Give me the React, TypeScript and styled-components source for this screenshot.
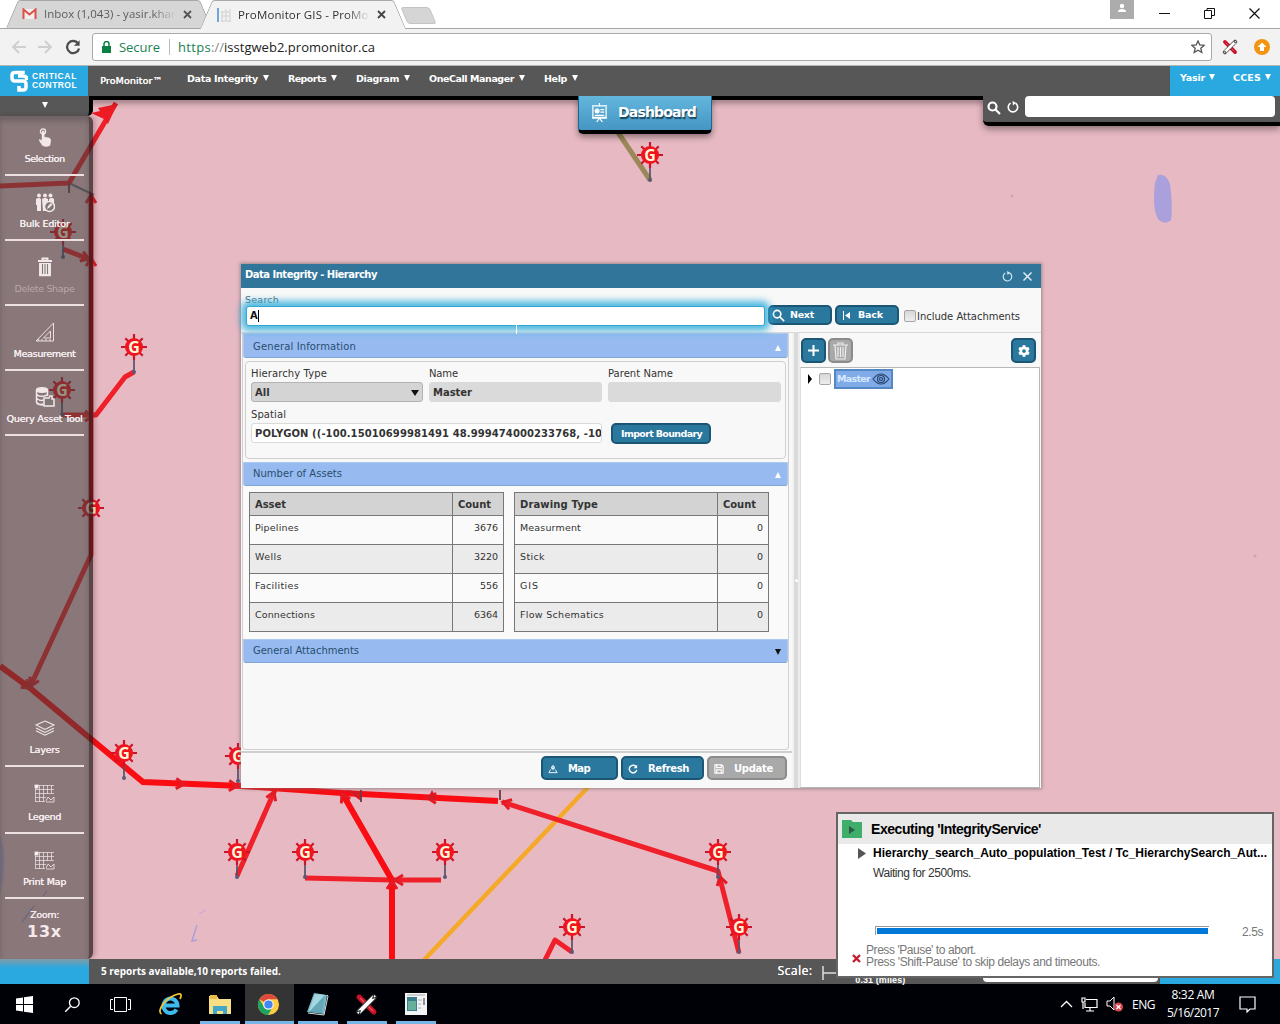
import React, { useLayoutEffect, useRef, useState } from "react";
import styled, { createGlobalStyle, css } from "styled-components";
import { FaCog } from "react-icons/fa";

const ui = '"DejaVu Sans", Verdana, sans-serif';
const chrome = '"Open Sans", "Segoe UI", sans-serif';
const arial = '"Liberation Sans", Arial, sans-serif';

const Global = createGlobalStyle`
  *, *::before, *::after { box-sizing: border-box; }
  body { margin: 0; overflow: hidden; background: #000; font-family: ${ui}; }
  svg { display: block; flex: none; }
`;

/* ---------- text with a fixed measure ---------- */
const TextSpan = styled.span<{ $size: number; $bold?: boolean; $color?: string; $font?: string; $shadow?: string }>`
  display: inline-block;
  flex: none;
  white-space: pre;
  font-family: ${(p) => p.$font || ui};
  font-size: ${(p) => p.$size}px;
  font-weight: ${(p) => (p.$bold ? 700 : 400)};
  color: ${(p) => p.$color || "inherit"};
  text-shadow: ${(p) => p.$shadow || "none"};
`;

type TextProps = { children: string; measure?: number; size: number; bold?: boolean; color?: string; font?: string; shadow?: string };

function Text({ children, measure, size, bold, color, font, shadow }: TextProps) {
  const ref = useRef<HTMLSpanElement>(null);
  const [tracking, setTracking] = useState(0);
  useLayoutEffect(() => {
    if (measure && ref.current) {
      const range = document.createRange();
      range.selectNodeContents(ref.current);
      setTracking((measure - range.getBoundingClientRect().width) / children.length);
    }
  }, []);
  return (
    <TextSpan ref={ref} $size={size} $bold={bold} $color={color} $font={font} $shadow={shadow} style={{ letterSpacing: tracking }}>
      {children}
    </TextSpan>
  );
}

const Screen = styled.div`
  width: 1280px; height: 1024px; display: flex; flex-direction: column; overflow: hidden; position: relative;
`;

/* ---------- browser ---------- */
const TabStrip = styled.div`
  height: 28px; display: flex; background: #fff; padding-left: 12px; flex: none; position: relative;
`;
const Tab = styled.div<{ $active?: boolean }>`
  position: relative; width: 194px; height: ${(p) => (p.$active ? 29 : 28)}px; flex: none; display: flex; align-items: center; gap: 7px;
  padding: 0 12px 0 10px; isolation: isolate; z-index: ${(p) => (p.$active ? 2 : 1)};
  &::before, &::after {
    content: ""; position: absolute; top: 0; bottom: 0; z-index: -1;
    background: ${(p) => (p.$active ? "#f2f2f2" : "#d6d6d6")}; border-top: 1px solid #a8a8a8;
  }
  &::before { left: 0; right: 30%; border-left: 1px solid #a0a0a0; transform: skewX(-23deg); border-radius: 3px 0 0 0; }
  &::after { right: 0; left: 30%; border-right: 1px solid #a0a0a0; transform: skewX(23deg); border-radius: 0 3px 0 0; }
`;
const TabTitle = styled.div`
  width: 132px; overflow: hidden; flex: none; height: 18px; line-height: 16px;
  mask-image: linear-gradient(90deg, #000 82%, transparent);
`;
const NewTab = styled.div`
  width: 29px; height: 17px; margin: 7px 0 0 4px; background: #d5d5d5; border: 1px solid #c4c4c4; border-radius: 3px; transform: skewX(23deg);
`;
const WindowButtons = styled.div`
  margin-left: auto; display: flex; align-items: flex-start; height: 28px; padding-right: 3px;
`;
const Profile = styled.div`
  width: 24px; height: 19px; background: #acacac; display: flex; justify-content: center; padding-top: 3px; margin-right: 8px;
`;
const WinBtn = styled.div`
  width: 45px; height: 27px; display: grid; place-items: center;
`;
const Toolbar = styled.div`
  height: 38px; flex: none; background: #f2f2f2; border-top: 1px solid #a5a5a5; border-bottom: 1px solid #b5b5b5;
  display: flex; align-items: center; padding-left: 11px;
`;
const NavIcons = styled.div` display: flex; gap: 12px; width: 81px; align-items: center; `;
const AddressBar = styled.div`
  width: 1120px; height: 28px; border: 1px solid #a9a9a9; border-radius: 3px; background: #fff; display: flex; align-items: center; padding: 0 6px 0 9px;
`;
const Divider = styled.i` width: 1px; height: 16px; background: #bdbdbd; margin: 0 8px 0 9px; `;
const Extensions = styled.div` display: flex; gap: 16px; padding-left: 10px; align-items: center; `;
const Push = styled.div` margin-left: auto; `;
const LockSlot = styled.div` width: 17px; `;

/* ---------- site header ---------- */
const SiteHeader = styled.header`
  height: 30px; flex: none; background: #575757; display: flex; position: relative; z-index: 4;
`;
const Brand = styled.div`
  width: 88px; background: #29a9e0; display: flex; align-items: center; gap: 4px; padding-left: 10px;
`;
const BrandWords = styled.div` display: flex; flex-direction: column; line-height: 9px; `;
const ProMonitor = styled.div` width: 99px; padding: 6px 0 0 12px; line-height: 13px; `;
const MenuItem = styled.div<{ $w?: number }>`
  width: ${(p) => (p.$w ? p.$w + "px" : "auto")}; display: flex; gap: 5px; padding-top: 6px; line-height: 13px; height: 24px; color: #fff; align-items: flex-start;
`;
const Caret = styled.i<{ $up?: boolean; $color?: string; $s?: number }>`
  width: 0; height: 0; flex: none;
  border: ${(p) => p.$s || 3.5}px solid transparent;
  ${(p) => p.$up
    ? css`border-top: 0; border-bottom: 6px solid ${p.$color || "#fff"};`
    : css`border-bottom: 0; border-top: 6px solid ${p.$color || "#fff"};`}
`;
const MenuCaret = styled(Caret)` margin-top: 3px; `;
const Account = styled.div`
  margin-left: auto; width: 110px; background: #29a9e0; display: flex; gap: 18px; padding-left: 10px;
  ${MenuItem} { padding-top: 5px; gap: 4px; }
`;

/* ---------- workspace ---------- */
const Workspace = styled.main` height: 863px; flex: none; position: relative; background: #e7b9c3; overflow: hidden; `;
const MapCanvas = styled.svg` position: absolute; inset: 0; `;
const TopRule = styled.div`
  position: absolute; top: 0; left: 89px; right: 0; height: 4px; background: #000; box-shadow: 0 2px 6px rgba(0,0,0,.55);
`;
const Sidebar = styled.aside`
  position: absolute; top: 0; left: 0; width: 93px; height: 863px; display: flex; flex-direction: column; color: #f5e9eb;
`;
const SideToggle = styled.div`
  height: 20px; width: 93px; background: #575757; border-right: 4px solid #000; border-radius: 0 0 6px 0; display: flex; justify-content: center; padding-top: 6px;
`;
const SideTools = styled.div`
  flex: 1; display: flex; flex-direction: column; background: rgba(60, 66, 62, .55); border-right: 4px solid rgba(25, 0, 4, .42);
  border-radius: 0 6px 6px 0; box-shadow: 2px 0 5px rgba(80,30,40,.3), inset 0 5px 5px rgba(60,60,60,.35);
`;
const Tool = styled.div<{ $h: number; $dim?: boolean; $gap?: number }>`
  height: ${(p) => p.$h}px; margin: 0 5px; border-bottom: 2px solid #ece0e2; display: flex; flex-direction: column; align-items: center; justify-content: flex-end;
  padding-bottom: 8px; gap: ${(p) => p.$gap || 4}px; line-height: 14px; color: ${(p) => (p.$dim ? "#b7a8ab" : "#f8eff0")};
  > svg { color: #f0e5e7; }
`;
const Spacer = styled.div` flex: 1; `;
const ZoomBox = styled.div` height: 60px; display: flex; flex-direction: column; align-items: center; padding-top: 8px; line-height: 15px; gap: 2px; `;

const Dashboard = styled.div`
  position: absolute; z-index: 5; left: 578px; top: 0; width: 134px; height: 38px; display: flex; align-items: center; padding: 0 0 0 12px; gap: 10px;
  background: linear-gradient(#63b6dc, #4596c4); border: 1px solid #1d678e; border-top: 0; border-bottom: 4px solid #000; border-radius: 0 0 5px 5px;
  box-shadow: 0 3px 6px rgba(0,0,0,.4); color: #fff;
  > span { position: relative; top: -1px; }
`;
const MapSearch = styled.div`
  position: absolute; left: 983px; top: 0; width: 297px; height: 30px; background: #575757; border-bottom: 4px solid #000; border-radius: 0 0 0 6px;
  box-shadow: 0 3px 7px rgba(0,0,0,.4); display: flex; gap: 6px; padding-left: 4px; align-items: flex-start;
  > svg { margin-top: 5px; }
`;
const MapSearchField = styled.div` width: 250px; height: 21px; background: #fff; border-radius: 4px; `;

/* ---------- dialog ---------- */
const Dialog = styled.section`
  position: absolute; z-index: 3; left: 241px; top: 168px; width: 800px; height: 524px; background: #f8f8f8; display: flex; flex-direction: column;
  box-shadow: 0 0 3px 1px rgba(110,110,110,.65); color: #333;
`;
const TitleBar = styled.div`
  height: 24px; flex: none; background: #31759b; display: flex; align-items: center; padding: 0 8px 3px 4px; gap: 9px; color: #fff;
  > span { margin-right: auto; } > svg { position: relative; top: 2px; }
`;
const SearchArea = styled.div`
  height: 45px; flex: none; display: grid; grid-template-columns: 519px 63px 64px 1fr; column-gap: 4px; padding: 0 4px; border-bottom: 1px solid #d8d8d8;
`;
const SearchCol = styled.div` padding-top: 5px; line-height: 14px; color: #4d6a7a; display: flex; flex-direction: column; align-items: flex-start; `;
const SearchInput = styled.div`
  position: relative; z-index: 1; width: 519px; height: 20px; margin: -1px 0 0 1px; background: #fff; border: 1px solid #36a5d0; border-radius: 3px; box-shadow: 0 0 7px 5px rgba(50,174,220,.85);
  padding: 1px 3px 2px; color: #111; display: flex; align-items: center;
`;
const TextCursor = styled.i` width: 1px; height: 12px; background: #000; `;
const Pointer = styled.i` position: absolute; left: 269px; top: 18px; width: 1px; height: 9px; background: #fff; `;
const Button = styled.div<{ $off?: boolean; $w?: number; $h?: number; $gap?: number; $pad?: number }>`
  width: ${(p) => p.$w || 64}px; height: ${(p) => p.$h || 20}px; flex: none; display: flex; align-items: center; gap: ${(p) => p.$gap ?? 5}px; padding-left: ${(p) => p.$pad ?? 5}px; color: #fff;
  border-radius: 5px; border: 2px solid ${(p) => (p.$off ? "#8b8b8b" : "#1b5675")}; background: ${(p) => (p.$off ? "#a9a9a9" : "#2b789f")}; line-height: 14px;
`;
const SearchButton = styled(Button)` margin-top: 17px; `;
const CheckLabel = styled.div` display: flex; align-items: center; gap: 1px; padding: 11px 0 0 1px; height: 45px; `;
const Checkbox = styled.i` width: 12px; height: 12px; flex: none; border: 1px solid #a6a6a6; border-radius: 2px; background: linear-gradient(#d7d7d7, #ededed); `;
const Panes = styled.div` flex: 1; display: flex; min-height: 0; `;
const LeftPane = styled.div` width: 551px; display: flex; flex-direction: column; `;
const Accordion = styled.div`
  width: 547px; height: 417px; margin-left: 1px; display: flex; flex-direction: column; border: 1px solid #d0d0d0; border-top: 0; border-radius: 0 0 4px 4px;
`;
const SectionHead = styled.div<{ $h?: number; $first?: boolean }>`
  height: ${(p) => p.$h || 25}px; flex: none; background: #97bbf1; border: 1px solid #aec9ee; border-bottom-color: #81a5d7; border-radius: 0 0 3px 3px; display: flex; align-items: center;
  justify-content: space-between; padding: ${(p) => (p.$first ? "2px 6px 0 9px" : "0 6px 0 9px")}; line-height: 14px; color: #294d6e; > i { margin-top: 2px; }
`;
const InfoBox = styled.div`
  width: 541px; height: 98px; margin: 3px 0 3px 2px; border: 1px solid #cfcfcf; border-radius: 4px; padding: 5px 4px 0 5px; display: flex; flex-direction: column;
`;
const FieldRow = styled.div` display: flex; gap: 6px; `;
const Field = styled.div<{ $w: number }>`
  width: ${(p) => p.$w}px; height: 41px; line-height: 13px; display: flex; flex-direction: column; gap: 2px;
  > span { align-self: flex-start; }
`;
const Box = styled.div<{ $kind?: "select" | "read" | "text" }>`
  height: 20px; border-radius: 3px; display: flex; align-items: center; justify-content: space-between; padding: 1px 3px 0; overflow: hidden; line-height: 17px;
  border: 1px solid ${(p) => (p.$kind === "select" ? "#b4b4b4" : "#dadada")};
  background: ${(p) => (p.$kind === "text" ? "#fff" : p.$kind === "select" ? "#d4d4d4" : "#dadada")};
`;
const ImportSlot = styled.div` padding: 15px 0 0 3px; `;
const Tables = styled.div` height: 153px; flex: none; display: flex; gap: 10px; padding: 6px 0 0 6px; background: #fafafa; `;
const Table = styled.div` width: 255px; height: 140px; border: 1px solid #777; display: flex; flex-direction: column; `;
const Row = styled.div<{ $head?: boolean; $alt?: boolean }>`
  height: ${(p) => (p.$head ? 22 : 29)}px; flex: none; display: grid; grid-template-columns: 202px 1fr; line-height: 14px;
  border-top: ${(p) => (p.$head ? 0 : 1)}px solid #777; background: ${(p) => (p.$head ? "#d3d3d3" : p.$alt ? "#ebebeb" : "#fafafa")};
  > div { display: flex; align-items: flex-start; padding: 5px 5px 0 5px; }
  > div + div { border-left: 1px solid #777; justify-content: ${(p) => (p.$head ? "flex-start" : "flex-end")}; }
`;
const Footer = styled.div`
  height: 37px; margin-top: 1px; border-top: 2px solid #cfcfcf; display: flex; justify-content: flex-end; gap: 3px; padding: 3px 5px 0 0;
  ${Button} { padding-top: 1px; }
`;
const Splitter = styled.div` width: 8px; background: #dadada; border-left: 2px solid #f2f2f2; border-right: 2px solid #ececec; display: grid; place-items: center; `;
const Grip = styled.i` width: 3px; height: 3px; border-radius: 50%; background: #fff; margin-top: 40px; `;
const RightPane = styled.div` flex: 1; display: flex; flex-direction: column; `;
const TreeTools = styled.div` height: 34px; display: flex; gap: 2px; padding: 5px 5px 0 1px; `;
const Square = styled(Button)` width: 25px; height: 25px; padding: 0; justify-content: center; `;
const Tree = styled.div` flex: 1; background: #fff; border: 1px solid #b8b8b8; border-left-color: #ddd; margin-right: 1px; display: flex; align-items: flex-start; padding: 0 0 0 6px; `;
const TreeRow = styled.div` height: 21px; display: flex; align-items: center; gap: 6px; `;
const TreeNode = styled.div` width: 59px; height: 20px; margin-left: -3px; background: #80abe8; border: 2px solid #5488c5; color: #d7e8ff; display: flex; align-items: center; gap: 2px; padding-left: 1px; line-height: 14px; `;

/* ---------- status bar, taskbar and popup ---------- */
const Status = styled.footer` height: 25px; flex: none; display: flex; background: #575757; color: #fff; position: relative; `;
const StatusBlue = styled.div<{ $w: number; $fade?: boolean }>`
  width: ${(p) => p.$w}px; background: ${(p) => (p.$fade ? "linear-gradient(#819ba6, #29a9e0 9px)" : "#29a9e0")};
`;
const StatusText = styled.div` width: 689px; padding: 4px 0 0 12px; line-height: 14px; `;
const ScaleText = styled.div` width: 45px; padding-top: 4px; line-height: 14px; `;
const ScaleBar = styled.div` width: 134px; height: 25px; color: #fff; display: flex; align-items: flex-end; `;
const Miles = styled.div` line-height: 12px; margin: 0 0 -2px -6px; `;
const CoordField = styled.div` width: 175px; height: 17px; margin: 6px 2px 0 27px; background: #fff; border-radius: 4px; `;
const Taskbar = styled.nav` height: 40px; flex: none; background: #000106; display: flex; color: #fff; `;
const Slot = styled.div<{ $active?: boolean; $w?: number; $open?: boolean }>`
  width: ${(p) => p.$w || 49}px; display: grid; place-items: center; position: relative; background: ${(p) => (p.$active ? "#343434" : "transparent")};
  > svg { margin-right: ${(p) => (p.$open ? 2 : 1)}px; }
  &::after { content: ""; display: ${(p) => (p.$open ? "block" : "none")}; position: absolute; bottom: 0; height: 3px; left: ${(p) => (p.$active ? 0 : 4)}px; right: ${(p) => (p.$active ? 0 : 5)}px; background: #76b5e5; }
`;
const Tray = styled.div` margin-left: auto; width: 220px; padding-right: 24px; display: flex; align-items: center; gap: 8px; `;
const Clock = styled.div` width: 58px; margin-left: 1px; display: flex; flex-direction: column; align-items: center; line-height: 18px; `;
const Popup = styled.section`
  position: absolute; z-index: 10; left: 836px; top: 812px; width: 438px; height: 166px; background: #fff; border: 2px solid #656565; display: flex; flex-direction: column; color: #000;
`;
const PopupHead = styled.div` height: 30px; flex: none; background: #e9e9e9; display: flex; align-items: center; gap: 9px; padding-left: 4px; `;
const PopupLine = styled.div` display: flex; gap: 7px; padding-left: 20px; margin-top: 1px; line-height: 16px; height: 16px; align-items: center; `;
const WaitLine = styled.div` padding: 5px 0 0 35px; height: 20px; line-height: 14px; display: flex; `;
const ProgressRow = styled.div` display: flex; padding: 43px 9px 0 37px; height: 61px; justify-content: space-between; align-items: flex-start; line-height: 17px; `;
const Progress = styled.div` width: 334px; height: 9px; margin-top: 2px; border: 1px solid #999; border-width: 1px 0 0 1px; padding: 1px 1px 0 1px; &::before { content: ""; display: block; height: 6px; background: #0078d7; } `;
const HintRow = styled.div` display: flex; gap: 5px; padding: 2px 0 0 14px; align-items: center; > svg { margin-top: 5px; } `;
const Hints = styled.div` display: flex; flex-direction: column; align-items: flex-start; line-height: 12px; color: #777; `;

/* ---------- drawings ---------- */
const Wrench = ({ s = 16 }: { s?: number }) => (
  <svg width={s} height={s} viewBox="0 0 22 22" fill="none">
    <path d="M4 4L18 18" stroke="#c8142a" strokeWidth="5" strokeLinecap="round" />
    <path d="M5 5L17 17" stroke="#f06070" strokeWidth="1" />
    <path d="M18 4L4 18" stroke="#333" strokeWidth="5.5" strokeLinecap="round" />
    <path d="M18 4L4 18" stroke="#fff" strokeWidth="3.8" strokeLinecap="round" />
    <path d="M18 1l-1 4 4-1M1 18l4-1-1 4" stroke="#222" />
  </svg>
);
const Reload = ({ s = 13, w = 2, color = "#fff" }: { s?: number; w?: number; color?: string }) => (
  <svg width={s} height={s} viewBox="0 0 14 14" fill="none" stroke={color} strokeWidth={w}>
    <path d="M11.5 4A5.3 5.3 0 1 0 12.3 8.3" /><path d="M12.8 1v5H7.8z" fill={color} stroke="none" />
  </svg>
);
const Cycle = ({ s = 12, color = "#fff", w = 1.6 }: { s?: number; color?: string; w?: number }) => (
  <svg width={s} height={s} viewBox="0 0 12 12" fill="none" stroke={color} strokeWidth={w}>
    <path d="M8.5 2.2A4.7 4.7 0 1 1 3.6 2.1" /><path d="M5.5 0L9 1.8 6 4.4z" fill={color} stroke="none" />
  </svg>
);
const Lens = ({ s = 14, w = 2.2, flip }: { s?: number; w?: number; flip?: boolean }) => (
  <svg width={s} height={s} viewBox="0 0 14 14" fill="none" stroke="#fff" strokeWidth={w} transform={flip ? "scale(-1 1)" : undefined}>
    <circle cx="5.5" cy="5.5" r="4" /><path d="M8.5 8.5L13 13" />
  </svg>
);
const Hand = () => (
  <svg width="14" height="20" viewBox="0 0 14 20" fill="none" stroke="#f2e8e9">
    <circle cx="5" cy="3.500" r="2.600" strokeWidth="1.300" />
    <path d="M4 3.500q1-1.500 2.200 0V9l5 1q1.800.5 1.500 3l-.8 4.500q-3.900 2-7.400 0L1.500 13 1.300 11.500 4 12.500z" fill="#f2e8e9" strokeWidth=".5" />
  </svg>
);
const Bin = () => (
  <svg width="16" height="20" viewBox="0 0 16 20" fill="none" stroke="#f2e8e9">
    <path d="M1 4h14M5.500 3.500v-2h5v2" strokeWidth="2" /><path d="M2.800 6v12.500h10.400V6" fill="#f2e8e9" strokeWidth="1.500" /><path d="M5.500 7v10M8 7v10M10.500 7v10" stroke="#84797a" strokeWidth="1.100" />
  </svg>
);
const GridMap = () => (
  <svg width="21" height="19" viewBox="0 0 21 19" fill="none" stroke="#eadfe1" strokeWidth=".9">
    <path d="M1 1.500h19M1 5.500h19M1 9.500h19M1 13.500h11M1 17.500h10M5.500 1v17M9.500 1v17M13.500 1v9M17.500 1v8M1.500 1v17" opacity=".85" />
    <path d="M12 17l2-4 3 3 3-3v5h-8" /><rect x="1" y="1" width="3" height="3" fill="#fff" />
  </svg>
);
const People = () => (
  <svg width="20" height="20" viewBox="0 0 20 20" fill="#f2e8e9">
    <circle cx="4" cy="2.5" r="2" /><circle cx="10" cy="2.5" r="2" /><circle cx="15.5" cy="2.5" r="2" />
    <path d="M1 6q3-2 5 0v12H2v-6H1zM7 6q3-2 6 0v12H8zM14 6q3-2 5 0v6h-5z" />
    <circle cx="14.5" cy="13.5" r="5" fill="#817678" stroke="#f2e8e9" strokeWidth="1.5" /><path d="M12 16l1-3 3-3 1.5 1.5-3 3z" fill="#f2e8e9" />
  </svg>
);
const Triangle = () => (
  <svg width="20" height="21" viewBox="0 0 20 21" fill="none" stroke="#eadfe1"><path d="M18.5 1v18H1z" /><path d="M15.5 9v7H8.500z" /><path d="M3 19l1-2M7 19v-2M11 19v-2M15 19v-2" /></svg>
);
const Database = () => (
  <svg width="20" height="20" viewBox="0 0 20 20" fill="none" stroke="#f2e8e9" strokeWidth="1.5">
    <ellipse cx="7" cy="3" rx="5.500" ry="2.200" fill="#f2e8e9" /><path d="M1.500 3v12c0 3 5 3 7 3M12.500 3v6M1.500 7c1 3 10 3 11 0M1.500 11c1 2 5 3 7 2M1.500 15c1 2 4 3 7 2" />
    <path d="M9 19v-8h5l1-2h2v3h2v7z" fill="#817678" />
  </svg>
);
const LayersIcon = () => (
  <svg width="20" height="16" viewBox="0 0 20 16" fill="none" stroke="#f2e8e9" strokeWidth="1.100"><path d="M10 1l9 4-9 4.500L1 5zM1 8l9 4.500L19 8M1 10.800l9 4.400 9-4.400" /></svg>
);
const Disk = () => (
  <svg width="10" height="10" viewBox="0 0 11 11" fill="none" stroke="#fff" strokeWidth="1.300"><path d="M1 1v9h9V2.500L8.500 1zM3 1v3h5V1M3 10V6.500h5V10" /></svg>
);
const MapPin = () => (
  <svg width="10" height="10" viewBox="0 0 11 11" fill="none" stroke="#fff"><path d="M3 6L1 9.500h9L8 6M5.500 1v6M4 3h3v2H4z" /></svg>
);
const ChromeLogo = () => (
  <svg width="23" height="23" viewBox="0 0 24 24">
    <circle cx="12" cy="12" r="11" fill="#ffcd40" />
    <path d="M12 12L2.500 6.500A11 11 0 0 1 21.500 6.500H12z" fill="#de4b3d" />
    <path d="M2.500 6.500A11 11 0 0 0 11.500 23L16.500 14.500 12 12 7 14z" fill="#1da362" />
    <circle cx="12" cy="12" r="5.500" fill="#f5f5f5" /><circle cx="12" cy="12" r="4.300" fill="#4286f3" />
  </svg>
);
const IELogo = () => (
  <svg width="24" height="24" viewBox="0 0 24 24" fill="none">
    <path d="M6 13.500H19.500A7 7.200 0 1 0 18.500 17.500" stroke="#40b9ee" strokeWidth="4" />
    <path d="M3.500 22C-2 19 8 5 20 2q5-1 2 5" stroke="#f6c72d" strokeWidth="1.700" />
  </svg>
);
const FolderLogo = () => (
  <svg width="24" height="21" viewBox="0 0 24 21"><path d="M1 2h8l2 3h12v15H1z" fill="#f7df85" /><path d="M2 1h7v4H2z" fill="#e9bd45" /><path d="M5 12h14v8h-4v-3H9v3H5z" fill="#43a5c8" /></svg>
);
const NotepadLogo = () => (
  <svg width="24" height="24" viewBox="0 0 24 24"><path d="M8 1l13 2-3 19L1 20z" fill="#77b9c8" /><path d="M9 2l10 1-3 17-13-1z" fill="#a3d6dd" /><path d="M3 20L19 3l-3 18z" fill="#4b94a8" opacity=".7" /><path d="M21 3l1 1-4 19-16-2" stroke="#ddd" fill="none" /></svg>
);
const WindowLogo = () => (
  <svg width="22" height="22" viewBox="0 0 22 22"><path d="M0 0h22v22H0z" fill="#f4f4f4" /><path d="M2 4h10v14H2z" fill="#397e8e" /><path d="M3 8h8v9H3z" fill="#67b09a" /><path d="M2 2h18M13 7h4M13 11h3M13 15h3" stroke="#aaa" /><path d="M19 5v7" stroke="#234" /></svg>
);

const G = ({ x, y, stem = 25 }: { x: number; y: number; stem?: number }) => (
  <g transform={`translate(${x} ${y})`}>
    <path d={`M0 12V${stem}`} stroke="#555267" strokeWidth="1.700" />
    {stem > 0 && <circle cy={stem} r="2" fill="#585a78" />}
    <path d="M0-13V13M-13 0H13M-8.700-8.700L8.700 8.700M8.700-8.700L-8.700 8.700" stroke="#c9152b" strokeWidth="2.200" />
    <circle r="9" fill="#f0141e" />
    <text y="5.500" textAnchor="middle" fontFamily="Open Sans" fontWeight="700" fontSize="16" fill="#fff6d8">G</text>
  </g>
);
const Arrow = ({ x, y, r }: { x: number; y: number; r: number }) => (
  <path d="M-8-5L0 0L-8 5" transform={`translate(${x} ${y}) rotate(${r})`} fill="none" stroke="#e31b24" strokeWidth="3" />
);

function Pipelines() {
  return (
    <MapCanvas width="1280" height="863" viewBox="0 96 1280 863">
      <g fill="#aaa0db">
        <path d="M1158 175q8-2 12 9 3 22 1 36-6 6-13-1-6-10-3-36z" />
        <path d="M0 835q7 20 2 48l-2 12z" opacity=".7" />
        <path d="M197 925l-5 16 5-1" fill="none" stroke="#aaa0db" strokeWidth="1.500" /><path d="M199 914l7-4" stroke="#c9a3d6" />
      </g>
      <g fill="#d6a0ae"><circle cx="1012" cy="196" r="1.500" /><circle cx="1255" cy="556" r="1.500" /></g>
      <path d="M22 922l12-16M43 896l4-5" stroke="#b59ac9" strokeWidth="1.500" />
      <path d="M615 128L650 180" stroke="#9b8859" strokeWidth="5" />
      <path d="M424 960L590 785" stroke="#f6a928" strokeWidth="4.500" />
      <path d="M69 183l25 12" stroke="#776b79" strokeWidth="2" />
      <g fill="none" stroke="#ef2029" strokeWidth="5" strokeLinejoin="round">
        <path d="M0 186L69 183L116 103" />
        <path d="M91 197V555L30 687" /><path d="M63 249L91 260" />
        <path d="M62 415H96L125 377L134 372" />
        <path d="M237 876L275 790" /><path d="M305 878L392 880H441" />
        <path d="M545 960L555 940L572 952" /><path d="M739 953L718 871L502 802" />
      </g>
      <g fill="none" stroke="#f90d13" strokeWidth="6">
        <path d="M0 666L30 688L91 739L143 782L242 786L342 793L498 801" />
        <path d="M342 793L392 880V960" />
      </g>
      <path d="M91 113l9-2-2-3 19-4-9 20-4-5z" fill="#ed1c24" />
      <Arrow x={91} y={195} r={-90} /><Arrow x={91} y={258} r={-90} /><Arrow x={89} y={259} r={20} />
      <Arrow x={93} y={416} r={0} /><Arrow x={31} y={686} r={115} /><Arrow x={30} y={688} r={37} />
      <Arrow x={184} y={784} r={3} /><Arrow x={237} y={786} r={3} /><Arrow x={274} y={792} r={-68} />
      <Arrow x={342} y={794} r={-118} /><Arrow x={392} y={881} r={-90} /><Arrow x={395} y={880} r={180} />
      <Arrow x={503} y={802} r={198} /><Arrow x={720} y={877} r={-105} /><Arrow x={428} y={798} r={182} />
      <path d="M346 790l15 2v9zM432 790l5 10h-10z" fill="#d51a24" />
      <path d="M361 790v12M500 790v10M69 183v10" stroke="#6f3b4a" strokeWidth="1.800" />
      <G x={650} y={155} /><G x={134} y={347} /><G x={63} y={232} /><G x={62} y={390} /><G x={91} y={508} stem={0} />
      <G x={124} y={753} /><G x={238} y={756} /><G x={237} y={852} /><G x={305} y={852} /><G x={445} y={852} />
      <G x={718} y={852} /><G x={572} y={927} /><G x={739} y={927} />
    </MapCanvas>
  );
}

const menus: [string, number, number][] = [["Data Integrity", 71, 101], ["Reports", 38, 68], ["Diagram", 43, 73], ["OneCall Manager", 85, 115], ["Help", 23, 50]];
const assets: [string, number, string, number][] = [["Pipelines", 44, "3676", 24], ["Wells", 27, "3220", 24], ["Facilities", 44, "556", 18], ["Connections", 60, "6364", 24]];
const drawings: [string, number, string, number][] = [["Measurment", 61, "0", 6], ["Stick", 25, "0", 6], ["GIS", 19, "0", 6], ["Flow Schematics", 84, "0", 6]];

function CountTable({ title, measure, rows }: { title: string; measure: number; rows: [string, number, string, number][] }) {
  return (
    <Table>
      <Row $head><div><Text size={10} bold measure={measure}>{title}</Text></div><div><Text size={10} bold measure={33}>Count</Text></div></Row>
      {rows.map(([name, w, count, cw], i) => (
        <Row key={name} $alt={i % 2 === 1}><div><Text size={9.5} measure={w}>{name}</Text></div><div><Text size={9.5} measure={cw}>{count}</Text></div></Row>
      ))}
    </Table>
  );
}

function Browser() {
  return (
    <>
      <TabStrip>
        <Tab>
          <svg width="15" height="12" viewBox="0 0 15 12"><path d="M1 1h13v10H1z" fill="#f5eeee" /><path d="M1.500 11V1.500l6 5 6-5V11" fill="none" stroke="#db5148" strokeWidth="2" /></svg>
          <TabTitle><Text size={11.5} font={chrome} color="#5c5c5c" measure={134}>Inbox (1,043) - yasir.khan</Text></TabTitle>
          <svg width="9" height="9" viewBox="0 0 9 9" stroke="#555" strokeWidth="1.800"><path d="M1 1l7 7M8 1L1 8" /></svg>
        </Tab>
        <Tab $active>
          <svg width="15" height="14" viewBox="0 0 15 14"><path d="M1 0h2v14H1z" fill="#6fa7d8" /><path d="M5 4h9M5 8h9M5 13h9M6 3v11M10 1v12M14 1v13" stroke="#d0d0d0" fill="none" /></svg>
          <TabTitle><Text size={11.5} font={chrome} color="#303030" measure={145}>ProMonitor GIS - ProMonit</Text></TabTitle>
          <svg width="9" height="9" viewBox="0 0 9 9" stroke="#444" strokeWidth="1.800"><path d="M1 1l7 7M8 1L1 8" /></svg>
        </Tab>
        <NewTab />
        <WindowButtons>
          <Profile><svg width="10" height="10" viewBox="0 0 10 10" fill="#fff"><circle cx="5" cy="3" r="2.200" /><path d="M1 9q0-3 4-3t4 3z" /></svg></Profile>
          <WinBtn><svg width="11" height="11" stroke="#111"><path d="M0 5.500h11" /></svg></WinBtn>
          <WinBtn><svg width="11" height="11" fill="none" stroke="#111"><path d="M.5 2.500h7v8h-7zM3 2V.5h7.500v7H8" /></svg></WinBtn>
          <WinBtn><svg width="11" height="11" stroke="#111" strokeWidth="1.200"><path d="M.5.5l10 10M10.500.5l-10 10" /></svg></WinBtn>
        </WindowButtons>
      </TabStrip>
      <Toolbar>
        <NavIcons>
          <svg width="15" height="14" fill="none" stroke="#cfcfcf" strokeWidth="2"><path d="M15 7H2M8 1L2 7l6 6" /></svg>
          <svg width="15" height="14" fill="none" stroke="#cfcfcf" strokeWidth="2"><path d="M0 7h13M7 1l6 6-6 6" /></svg>
          <Reload s={16} color="#4b4b4b" />
        </NavIcons>
        <AddressBar>
          <LockSlot><svg width="9" height="12" viewBox="0 0 9 12"><path d="M0 5h9v7H0z" fill="#0b8043" /><path d="M2 5V3a2.500 2.500 0 0 1 5 0v2" fill="none" stroke="#0b8043" strokeWidth="1.500" /></svg></LockSlot>
          <Text size={13} font={chrome} color="#1a8251" measure={41}>Secure</Text>
          <Divider />
          <Text size={13} font={chrome} color="#1a8251" measure={33}>https</Text>
          <Text size={13} font={chrome} color="#888" measure={13}>://</Text>
          <Text size={13} font={chrome} color="#222" measure={151}>isstgweb2.promonitor.ca</Text>
          <Push><svg width="14" height="14" viewBox="0 0 14 14" fill="none" stroke="#555" strokeWidth="1.300"><path d="M7 1l1.800 4 4.200.4-3.200 2.800 1 4.300L7 10.300 3.200 12.500l1-4.300L1 5.400 5.200 5z" /></svg></Push>
        </AddressBar>
        <Extensions>
          <Wrench />
          <svg width="16" height="16" viewBox="0 0 16 16"><circle cx="8" cy="8" r="8" fill="#f29412" /><path d="M8 3.500l4.500 4.500H10v4H6V8H3.500z" fill="#fff" /></svg>
        </Extensions>
      </Toolbar>
    </>
  );
}

function HierarchyDialog() {
  return (
    <Dialog>
      <TitleBar>
        <Text size={10} bold measure={132}>Data Integrity - Hierarchy</Text>
        <Cycle s={11} w={1.2} color="#d9edf6" />
        <svg width="11" height="11" viewBox="0 0 11 11" stroke="#e4f2f8" strokeWidth="1.400"><path d="M1.500 1.500l8 8M9.500 1.500l-8 8" /></svg>
      </TitleBar>
      <SearchArea>
        <SearchCol>
          <Text size={9.5} measure={34}>Search</Text>
          <SearchInput><Text size={10} bold>A</Text><TextCursor /><Pointer /></SearchInput>
        </SearchCol>
        <SearchButton $gap={5} $pad={2}><Lens s={13} w={1.8} /><Text size={9.5} bold measure={24}>Next</Text></SearchButton>
        <SearchButton $gap={7}><svg width="9" height="9" viewBox="0 0 9 9" fill="#fff"><path d="M1 0h1v9H1zM8 1v7L3 4.500z" /></svg><Text size={9.5} bold measure={25}>Back</Text></SearchButton>
        <CheckLabel><Checkbox /><Text size={10} measure={103}>Include Attachments</Text></CheckLabel>
      </SearchArea>
      <Panes>
        <LeftPane>
          <Accordion>
            <SectionHead $first><Text size={10} measure={103}>General Information</Text><Caret $up /></SectionHead>
            <InfoBox>
              <FieldRow>
                <Field $w={172}><Text size={10} measure={76}>Hierarchy Type</Text><Box $kind="select"><Text size={10} bold>All</Text><Caret $color="#111" $s={4} /></Box></Field>
                <Field $w={173}><Text size={10} measure={29}>Name</Text><Box><Text size={10} bold measure={39}>Master</Text></Box></Field>
                <Field $w={173}><Text size={10} measure={65}>Parent Name</Text><Box /></Field>
              </FieldRow>
              <FieldRow>
                <Field $w={351}><Text size={10} measure={35}>Spatial</Text><Box $kind="text"><Text size={10} bold measure={347}>POLYGON ((-100.15010699981491 48.999474000233768, -10</Text></Box></Field>
                <ImportSlot><Button $w={100} $h={21} $pad={8}><Text size={9.5} bold measure={81}>Import Boundary</Text></Button></ImportSlot>
              </FieldRow>
            </InfoBox>
            <SectionHead $h={24}><Text size={10} measure={89}>Number of Assets</Text><Caret $up /></SectionHead>
            <Tables>
              <CountTable title="Asset" measure={31} rows={assets} />
              <CountTable title="Drawing Type" measure={78} rows={drawings} />
            </Tables>
            <SectionHead $h={24}><Text size={10} measure={106}>General Attachments</Text><Caret $color="#111" /></SectionHead>
          </Accordion>
          <Footer>
            <Button $w={77} $h={24} $gap={10}><MapPin /><Text size={10} bold measure={22}>Map</Text></Button>
            <Button $w={83} $h={24} $gap={10}><Reload s={10} /><Text size={10} bold measure={41}>Refresh</Text></Button>
            <Button $off $w={80} $h={24} $gap={10}><Disk /><Text size={10} bold measure={39}>Update</Text></Button>
          </Footer>
        </LeftPane>
        <Splitter><Grip /></Splitter>
        <RightPane>
          <TreeTools>
            <Square><svg width="11" height="11" stroke="#fff" strokeWidth="2"><path d="M5.500 0v11M0 5.500h11" /></svg></Square>
            <Square $off><svg width="15" height="18" viewBox="0 0 15 18" fill="none" stroke="#eee" strokeWidth="1.200"><path d="M0 3h15M5 3V1h5v2M2 3l1 14h9l1-14M5 5v10M7.500 5v10M10 5v10" /></svg></Square>
            <Push><Square><FaCog size={12} /></Square></Push>
          </TreeTools>
          <Tree>
            <TreeRow>
              <svg width="6" height="10"><path d="M1 0l4 5-4 5z" /></svg>
              <Checkbox />
              <TreeNode><Text size={9.5} bold measure={33}>Master</Text><svg width="18" height="12" viewBox="0 0 18 12" fill="none" stroke="#27436d" strokeWidth="1.200"><path d="M1 6q8-10 16 0-8 10-16 0z" /><circle cx="9" cy="6" r="3.500" /><circle cx="9" cy="6" r="1.500" /></svg></TreeNode>
            </TreeRow>
          </Tree>
        </RightPane>
      </Panes>
    </Dialog>
  );
}

const soft = "0.3px 0 currentColor";

export default function App() {
  return (
    <>
      <Global />
      <Screen>
        <Browser />
        <SiteHeader>
          <Brand>
            <svg width="18" height="22" viewBox="0 0 18 22" fill="none" stroke="#fff" strokeWidth="3.500"><path d="M13 4V2.500H5Q2 2.500 2 5v3q0 3 3 3h8q3 0 3 3v3q0 3-3 3H9v-4M8 6h5q4 0 4 4" /></svg>
            <BrandWords><Text size={8.5} font={arial} bold color="#fff" measure={45}>CRITICAL</Text><Text size={8.5} font={arial} bold color="#fff" measure={45}>CONTROL</Text></BrandWords>
          </Brand>
          <ProMonitor><Text size={9.5} color="#fff" measure={62} shadow="0.4px 0 #fff">ProMonitor™</Text></ProMonitor>
          {menus.map(([name, measure, w]) => <MenuItem $w={w} key={name}><Text size={9.5} bold measure={measure}>{name}</Text><MenuCaret /></MenuItem>)}
          <Account>
            <MenuItem><Text size={9.5} bold measure={25}>Yasir</Text><MenuCaret /></MenuItem>
            <MenuItem><Text size={9.5} bold measure={28}>CCES</Text><MenuCaret /></MenuItem>
          </Account>
        </SiteHeader>
        <Workspace>
          <Pipelines />
          <TopRule />
          <Sidebar>
            <SideToggle><Caret /></SideToggle>
            <SideTools>
              <Tool $h={60}><Hand /><Text size={9.5} measure={40} shadow={soft}>Selection</Text></Tool>
              <Tool $h={65}><People /><Text size={9.5} measure={50} shadow={soft}>Bulk Editor</Text></Tool>
              <Tool $h={65} $dim $gap={5}><Bin /><Text size={9.5} measure={60}>Delete Shape</Text></Tool>
              <Tool $h={65}><Triangle /><Text size={9.5} measure={62} shadow={soft}>Measurement</Text></Tool>
              <Tool $h={65} $gap={5}><Database /><Text size={9.5} measure={76} shadow={soft}>Query Asset Tool</Text></Tool>
              <Spacer />
              <Tool $h={65} $gap={7}><LayersIcon /><Text size={9.5} measure={30} shadow={soft}>Layers</Text></Tool>
              <Tool $h={67} $gap={7}><GridMap /><Text size={9.5} measure={33} shadow={soft}>Legend</Text></Tool>
              <Tool $h={65} $gap={5}><GridMap /><Text size={9.5} measure={43} shadow={soft}>Print Map</Text></Tool>
              <ZoomBox><Text size={9.5} measure={29} shadow={soft}>Zoom:</Text><Text size={16} bold measure={35}>13x</Text></ZoomBox>
            </SideTools>
          </Sidebar>
          <Dashboard>
            <svg width="17" height="20" viewBox="0 0 18 21" fill="none" stroke="#fff" strokeWidth="1.300"><path d="M1 3h16M2 4v11h14V4M1 16h16M9 0v3M6 20l3-4 3 4" /><path d="M10 7h4M10 9.500h4M4 13h10" /><circle cx="6.500" cy="8.500" r="2" fill="#fff" /></svg>
            <Text size={14} bold measure={78} shadow="1px 2px 1px #17445f">Dashboard</Text>
          </Dashboard>
          <MapSearch><Lens s={14} w={2.2} /><Cycle /><MapSearchField /></MapSearch>
          <HierarchyDialog />
        </Workspace>
        <Status>
          <StatusBlue $w={89} $fade />
          <StatusText><Text size={10} font={chrome} bold measure={180}>5 reports available,10 reports failed.</Text></StatusText>
          <ScaleText><Text size={12} font={chrome} measure={35} shadow="0.3px 0 #fff">Scale:</Text></ScaleText>
          <ScaleBar><svg width="39" height="25" fill="none" stroke="#ddd" strokeWidth="1.500"><path d="M1 7v14M1 14h38" /></svg><Miles><Text size={9} font={arial} bold measure={50}>0.31 (miles)</Text></Miles></ScaleBar>
          <CoordField />
          <StatusBlue $w={120} />
        </Status>
        <Taskbar>
          <Slot $w={49}><svg width="17" height="17" viewBox="0 0 17 17" fill="#fff"><path d="M0 2.500l7-1V8H0zM8 1.300L17 0v8H8zM0 9h7v6.500l-7-1zM8 9h9v8l-9-1.300z" /></svg></Slot>
          <Slot $w={47}><Lens s={17} w={1.1} flip /></Slot>
          <Slot $w={49}><svg width="21" height="15" fill="none" stroke="#fff"><path d="M4.500.5h12v14h-12zM3 2.500H.5v10H3M18 2.500h2.500v10H18" /></svg></Slot>
          <Slot $w={51}><IELogo /></Slot>
          <Slot $open><FolderLogo /></Slot>
          <Slot $open $active><ChromeLogo /></Slot>
          <Slot $open><NotepadLogo /></Slot>
          <Slot $open><Wrench s={23} /></Slot>
          <Slot $open><WindowLogo /></Slot>
          <Tray>
            <svg width="13" height="8" fill="none" stroke="#fff" strokeWidth="1.300"><path d="M1 7l5.500-5.500L12 7" /></svg>
            <svg width="17" height="15" fill="none" stroke="#fff" strokeWidth="1.200"><path d="M5 2.500h11v8H4V6M1 1h3v4H1zM9 10v4M5 14h8M2 5v7" /></svg>
            <svg width="18" height="16" viewBox="0 0 18 16"><path d="M1 5h3l4-4v13L4 10H1z" fill="none" stroke="#fff" /><circle cx="12.500" cy="11" r="4.500" fill="#d64550" /><path d="M10.500 9l4 4M14.500 9l-4 4" stroke="#fff" strokeWidth="1.200" /></svg>
            <Text size={12} font={chrome} measure={23}>ENG</Text>
            <Clock><Text size={12} font={chrome} measure={43}>8:32 AM</Text><Text size={12} font={chrome} measure={52}>5/16/2017</Text></Clock>
            <Push><svg width="17" height="17" fill="none" stroke="#fff" strokeWidth="1.200"><path d="M1 1h15v12h-5l-3 3v-3H1z" /></svg></Push>
          </Tray>
        </Taskbar>
        <Popup>
          <PopupHead>
            <svg width="20" height="18" viewBox="0 0 20 18"><path d="M0 0h9l2 2h9v16H0z" fill="#3fae6b" /><path d="M7 6l6 4-6 4z" fill="#2e5944" /></svg>
            <Text size={14} font={arial} bold measure={170}>Executing 'IntegrityService'</Text>
          </PopupHead>
          <PopupLine><svg width="8" height="11"><path d="M0 0l8 5.500L0 11z" fill="#555" /></svg><Text size={12} font={arial} bold measure={394}>Hierarchy_search_Auto_population_Test / Tc_HierarchySearch_Aut...</Text></PopupLine>
          <WaitLine><Text size={12} font={arial} color="#333" measure={98}>Waiting for 2500ms.</Text></WaitLine>
          <ProgressRow><Progress /><Text size={12} font={arial} color="#777" measure={21}>2.5s</Text></ProgressRow>
          <HintRow>
            <svg width="9" height="9" stroke="#c41e2c" strokeWidth="2.400"><path d="M1 1l7 7M8 1L1 8" /></svg>
            <Hints><Text size={12} font={arial} measure={110}>Press 'Pause' to abort.</Text><Text size={12} font={arial} measure={234}>Press 'Shift-Pause' to skip delays and timeouts.</Text></Hints>
          </HintRow>
        </Popup>
      </Screen>
    </>
  );
}
